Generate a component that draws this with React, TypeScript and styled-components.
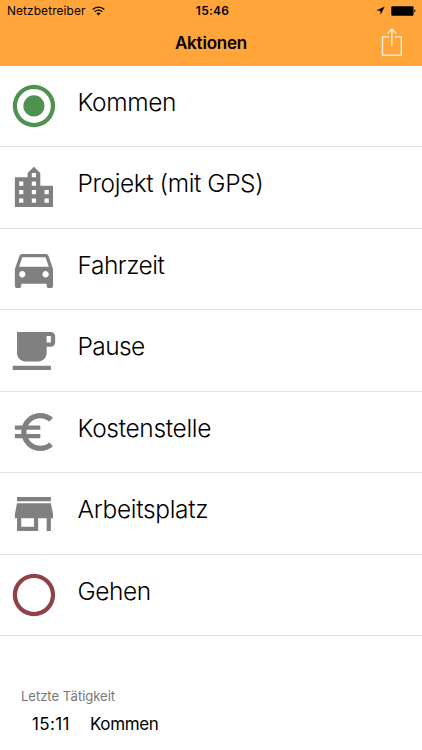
import React from "react";
import styled, { createGlobalStyle } from "styled-components";

const GlobalStyle = createGlobalStyle`
  * { box-sizing: border-box; }
  body {
    margin: 0;
    background: #fff;
    color: #000;
    font-family: Inter, "Liberation Sans", sans-serif;
  }
`;

const Screen = styled.main`
  width: 422px;
  height: 750px;
  overflow: hidden;
  background: #fff;
`;

const Header = styled.header`
  height: 65.5px;
  background: #ffa53a;
`;

const StatusBar = styled.div`
  display: grid;
  grid-template-columns: 1fr auto 1fr;
  align-items: center;
  height: 21px;
  padding: 0 6px 0 7px;
`;

const Carrier = styled.div`
  display: flex;
  align-items: center;
  gap: 6px;
  font-size: 11.8px;
  letter-spacing: 0.15px;
`;

const Clock = styled.div`
  padding-left: 2px;
  font-size: 12px;
  font-weight: 600;
  letter-spacing: 0.25px;
`;

const Indicators = styled.div`
  display: flex;
  justify-content: flex-end;
  align-items: center;
  gap: 6px;
`;

const NavBar = styled.div`
  display: grid;
  grid-template-columns: 1fr auto 1fr;
  align-items: center;
  height: 43px;
  padding-right: 20px;
  padding-left: 20px;
`;

const Title = styled.h1`
  grid-column: 2;
  margin: 0;
  font-size: 17px;
  line-height: 22px;
  font-weight: 600;
  letter-spacing: -0.2px;
`;

const ShareButton = styled.button`
  justify-self: end;
  display: flex;
  margin-bottom: 1px;
  padding: 0;
  border: 0;
  background: none;
`;

const List = styled.ul`
  margin: 0;
  padding: 0;
  list-style: none;
`;

const Row = styled.li`
  display: flex;
  align-items: flex-start;
  gap: 17.6px;
  height: 81.5px;
  padding: 14.5px 0 0 8px;
  border-bottom: 1px solid #e4e4e6;
`;

const ActionIcon = styled.svg<{ $color: string }>`
  flex: none;
  width: 52px;
  height: 52px;
  fill: ${({ $color }) => $color};
`;

const Label = styled.span<{ $spacing: number }>`
  padding-top: 5.8px;
  font-size: 24.5px;
  line-height: 32px;
  font-weight: 300;
  letter-spacing: ${({ $spacing }) => $spacing}px;
  white-space: nowrap;
`;

const LastActivity = styled.section`
  padding: 52px 0 0 21px;
`;

const Caption = styled.div`
  color: #77777a;
  font-size: 13px;
  line-height: 16px;
`;

const Entry = styled.div`
  display: flex;
  padding: 8.5px 0 0 11px;
  font-size: 17px;
  line-height: 22px;
`;

const EntryTime = styled.span`
  width: 58px;
  letter-spacing: 0.35px;
`;

const EntryName = styled.span`
  letter-spacing: -0.4px;
`;

const GREY = "#808080";

const actions = [
  {
    label: "Kommen",
    spacing: -0.4,
    color: "#4f924f",
    path: "M12 7a5 5 0 1 0 0 10 5 5 0 0 0 0-10zm0-5a10 10 0 1 0 0 20 10 10 0 0 0 0-20zm0 18a8 8 0 1 1 0-16 8 8 0 0 1 0 16z",
  },
  {
    label: "Projekt (mit GPS)",
    spacing: -0.42,
    color: GREY,
    path: "M15 11V5l-3-3-3 3v2H3v14h18V11h-6zm-8 8H5v-2h2v2zm0-4H5v-2h2v2zm0-4H5V9h2v2zm6 8h-2v-2h2v2zm0-4h-2v-2h2v2zm0-4h-2V9h2v2zm0-4h-2V5h2v2zm6 12h-2v-2h2v2zm0-4h-2v-2h2v2z",
  },
  {
    label: "Fahrzeit",
    spacing: -0.5,
    color: GREY,
    path: "M18.92 6.01C18.72 5.42 18.16 5 17.5 5h-11c-.66 0-1.21.42-1.42 1.01L3 12v8c0 .55.45 1 1 1h1c.55 0 1-.45 1-1v-1h12v1c0 .55.45 1 1 1h1c.55 0 1-.45 1-1v-8l-2.08-5.99zM6.5 16c-.83 0-1.5-.67-1.5-1.5S5.67 13 6.5 13s1.5.67 1.5 1.5S7.33 16 6.5 16zm11 0c-.83 0-1.5-.67-1.5-1.5s.67-1.5 1.5-1.5 1.5.67 1.5 1.5-.67 1.5-1.5 1.5zM5 11l1.5-4.5h11L19 11H5z",
  },
  {
    label: "Pause",
    spacing: -0.65,
    color: GREY,
    path: "M20 3H4v10c0 2.21 1.79 4 4 4h6c2.21 0 4-1.79 4-4v-3h2c1.11 0 2-.9 2-2V5c0-1.11-.89-2-2-2zm0 5h-2V5h2v3zM2 21h18v-2H2v2z",
  },
  {
    label: "Kostenstelle",
    spacing: -0.32,
    color: GREY,
    path: "M15 18.5c-2.51 0-4.68-1.42-5.76-3.5H15v-2H8.58c-.05-.33-.08-.66-.08-1s.03-.67.08-1H15V9H9.24C10.32 6.92 12.5 5.5 15 5.5c1.61 0 3.09.59 4.23 1.57L21 5.3C19.41 3.87 17.3 3 15 3c-3.92 0-7.24 2.51-8.48 6H3v2h3.06c-.04.33-.06.66-.06 1s.02.67.06 1H3v2h3.52c1.24 3.49 4.56 6 8.48 6 2.31 0 4.41-.87 6-2.3l-1.78-1.77c-1.13.98-2.6 1.57-4.22 1.57z",
  },
  {
    label: "Arbeitsplatz",
    spacing: -0.32,
    color: GREY,
    path: "M20 4H4v2h16V4zm1 10v-2l-1-5H4l-1 5v2h1v6h10v-6h4v6h2v-6h1zm-9 4H6v-4h6v4z",
  },
  {
    label: "Gehen",
    spacing: -0.5,
    color: "#914145",
    path: "M12 2a10 10 0 1 0 0 20 10 10 0 0 0 0-20zm0 18a8 8 0 1 1 0-16 8 8 0 0 1 0 16z",
  },
];

const WifiIcon = () => (
  <svg width="13" height="10" viewBox="0 0 13 10" fill="none" stroke="#000" strokeWidth="1.4">
    <path d="M.7 3.5a8.2 8.2 0 0 1 11.6 0M2.8 5.7a5.2 5.2 0 0 1 7.4 0" />
    <path d="M4.5 7.4a2.9 2.9 0 0 1 4 0l-2 2z" fill="#000" stroke="none" />
  </svg>
);

const LocationIcon = () => (
  <svg width="9" height="9" viewBox="0 0 9 9">
    <path d="M8.7.4.3 4.4l4 .4.3 4z" />
  </svg>
);

const BatteryIcon = () => (
  <svg width="25" height="10" viewBox="0 0 25 10">
    <rect x="0.3" y="0.2" width="22.2" height="9.5" rx="1" />
    <path d="M23.3 3.3c1.5.3 1.5 3 0 3.3z" />
  </svg>
);

const ShareIcon = () => (
  <svg width="21" height="28" viewBox="-0.4 0 21 28" fill="none" stroke="#fff6e3" strokeWidth="1.3">
    <path d="M7.7 8.8H1.1v18.3h18.8V8.8h-6.6M10.5 18V1.2M6.2 5.4l4.3-4.3 4.3 4.3" />
  </svg>
);

export default function App() {
  return (
    <Screen>
      <GlobalStyle />
      <Header>
        <StatusBar>
          <Carrier>
            Netzbetreiber
            <WifiIcon />
          </Carrier>
          <Clock>15:46</Clock>
          <Indicators>
            <LocationIcon />
            <BatteryIcon />
          </Indicators>
        </StatusBar>
        <NavBar>
          <Title>Aktionen</Title>
          <ShareButton aria-label="Teilen">
            <ShareIcon />
          </ShareButton>
        </NavBar>
      </Header>
      <List>
        {actions.map(({ label, spacing, color, path }) => (
          <Row key={label}>
            <ActionIcon $color={color} viewBox="-0.25 -0.25 24.55 24.55">
              <path d={path} fillRule="evenodd" />
            </ActionIcon>
            <Label $spacing={spacing}>{label}</Label>
          </Row>
        ))}
      </List>
      <LastActivity>
        <Caption>Letzte Tätigkeit</Caption>
        <Entry>
          <EntryTime>15:11</EntryTime>
          <EntryName>Kommen</EntryName>
        </Entry>
      </LastActivity>
    </Screen>
  );
}
